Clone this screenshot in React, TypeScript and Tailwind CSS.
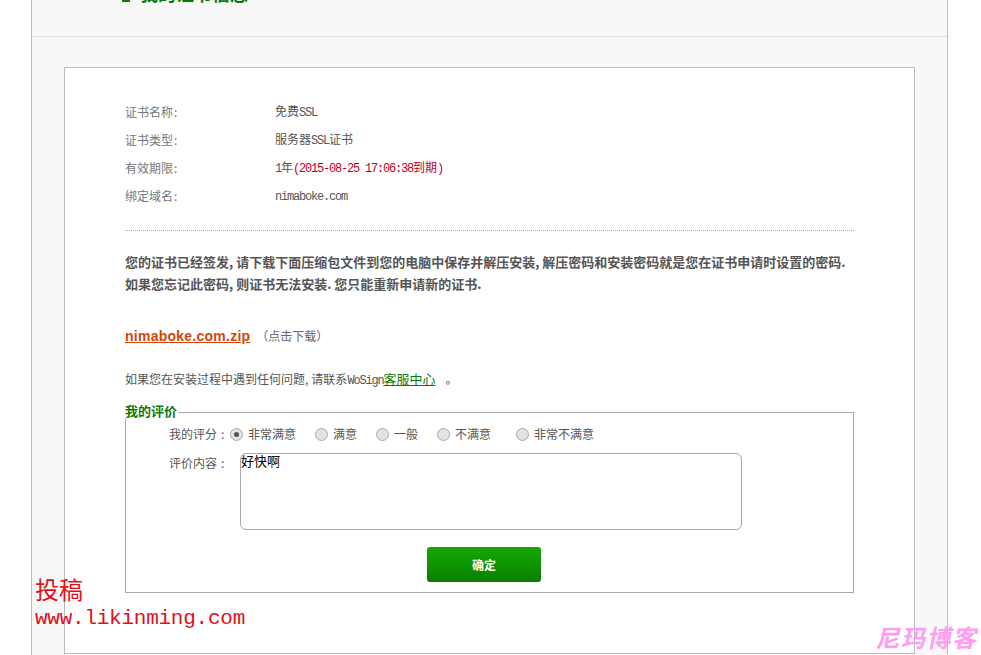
const sans = "font-['Noto_Sans_CJK_SC','Liberation_Sans',sans-serif]";
const mono = "font-['Liberation_Mono','Noto_Sans_CJK_SC',monospace] tracking-[-1.2px]";

function Row({ label, children }: { label: string; children: React.ReactNode }) {
  return (
    <div className="flex h-7 items-center">
      <div className="w-[150px] text-[#777]">
        {label}
        <span className="ml-px">:</span>
      </div>
      <div className="text-[#555]">{children}</div>
    </div>
  );
}

function Radio({ label, checked, width }: { label: string; checked?: boolean; width: number }) {
  return (
    <div className="flex items-center" style={{ width }}>
      <span className="mr-[5px] flex h-[13px] w-[13px] items-center justify-center rounded-full border border-[#aaa] bg-[#e2e2e2]">
        {checked && <span className="h-[5px] w-[5px] rounded-full bg-[#555]" />}
      </span>
      <span>{label}</span>
    </div>
  );
}

export default function App() {
  return (
    <div className={`h-[655px] w-[981px] overflow-hidden bg-white text-xs ${sans}`}>
      <div className="ml-[31px] h-[700px] w-[917px] border-x border-[#bbb] bg-[#f8f8f8]">
        <div className="flex h-[37px] items-start overflow-hidden border-b border-[#ddd] pl-[90px]">
          <div className="-mt-[16px] flex items-center gap-[10px] text-lg leading-[18px] font-bold text-[#0a7a0a]">
            <span className="h-[18px] w-2 bg-[#0a7a0a]" />
            <span>我的证书信息</span>
          </div>
        </div>
        <div className="ml-8 mt-[30px] h-[587px] w-[851px] border border-[#bbb] bg-white pl-[60px] pr-[60px] pt-[30px]">
          <Row label="证书名称">
            免费<span className={mono}>SSL</span>
          </Row>
          <Row label="证书类型">
            服务器<span className={mono}>SSL</span>证书
          </Row>
          <Row label="有效期限">
            <span className={mono}>1</span>年
            <span className="text-[#c0001a]">
              <span className={mono}>(2015-08-25 17:06:38</span>到期
              <span className={mono}>)</span>
            </span>
          </Row>
          <Row label="绑定域名">
            <span className={mono}>nimaboke.com</span>
          </Row>

          <div className="mt-5 border-t border-dotted border-[#aaa]" />

          <p className="mt-5 text-[13px] font-bold leading-[22px] text-[#555]">
            您的证书已经签发, 请下载下面压缩包文件到您的电脑中保存并解压安装, 解压密码和安装密码就是您在证书申请时设置的密码.
            <br />
            如果您忘记此密码, 则证书无法安装. 您只能重新申请新的证书.
          </p>

          <div className="mt-[31px] flex h-5 items-center text-[#666]">
            <a className="font-['Liberation_Sans',sans-serif] text-sm font-bold tracking-[0.25px] text-[#d4450c] underline">nimaboke.com.zip</a>
            <span className="ml-[6px]">（点击下载）</span>
          </div>

          <div className="mt-[23px] h-[21px] leading-5 text-[#555]">
            如果您在安装过程中遇到任何问题<span className="mr-[3px]">,</span>请联系<span className={mono}>WoSign</span>
            <a className="text-[13px] text-[#0a7a0a] underline">客服中心</a>
            <span className="ml-[10px]">。</span>
          </div>

          <div className="relative mt-[22px] h-[181px] border border-[#aaa] pl-[43px] pt-[13px] text-[#555]">
            <div className="absolute -left-px -top-[9px] bg-white pr-[1px] text-[13px] font-bold leading-[14px] text-[#0a7a0a]">我的评价</div>
            <div className="flex h-[16px] items-center">
              <span className="w-[61px]">
                我的评分<span className="ml-[4px]">:</span>
              </span>
              <Radio label="非常满意" checked width={85} />
              <Radio label="满意" width={61} />
              <Radio label="一般" width={61} />
              <Radio label="不满意" width={79} />
              <Radio label="非常不满意" width={90} />
            </div>
            <div className="mt-[11px] flex items-start">
              <span className="w-[71px] pt-[2px]">
                评价内容<span className="ml-[4px]">:</span>
              </span>
              <div className="h-[77px] w-[502px] rounded-md border border-[#aaa] text-[13px] leading-[13px] text-black">好快啊</div>
            </div>
            <div className="mt-[17px] ml-[258px] flex h-[35px] w-[114px] items-center justify-center rounded-[3px] bg-gradient-to-b from-[#15a905] to-[#0a7f00] font-bold text-white">
              确定
            </div>
          </div>
        </div>
      </div>
      <div className="absolute left-[35px] top-[575px] text-[#e0101c]">
        <div className="text-[24px] leading-[28px]">投稿</div>
        <div className="mt-[2px] font-['Liberation_Mono',monospace] text-[21px] leading-[28px] tracking-[-0.25px]">www.likinming.com</div>
      </div>
      <div className="absolute left-[878px] top-[622px] -skew-x-12 text-[24px] font-bold leading-[30px] tracking-[1.5px] whitespace-nowrap text-[#ff9df0]">
        尼玛博客
      </div>
    </div>
  );
}
